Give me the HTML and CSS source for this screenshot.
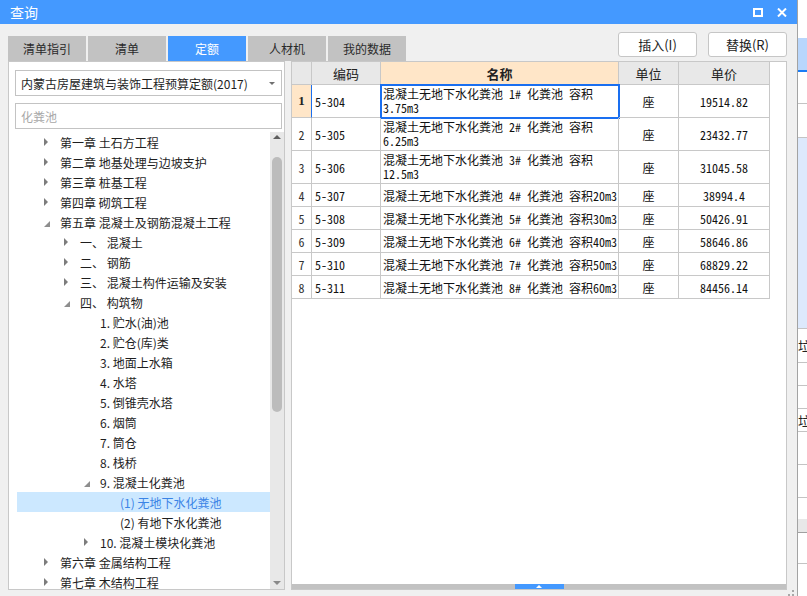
FILE: index.html
```html
<!DOCTYPE html>
<html lang="zh-CN">
<head>
<meta charset="utf-8">
<title>查询</title>
<link rel="stylesheet" href="styles.css">
</head>
<body>
<div class="app">
  <div class="dialog">
    <div class="titlebar">
      <span class="title">查询</span>
      <span class="tb-icons">
        <span class="ico-max"></span>
        <svg class="ico-close" width="10" height="9" viewBox="0 0 10 9"><path d="M1 0.5 L9 8.5 M9 0.5 L1 8.5" stroke="#fff" stroke-width="2" fill="none"/></svg>
      </span>
    </div>
    <div class="toolbar">
      <div class="tabs">
        <div class="tab">清单指引</div>
        <div class="tab">清单</div>
        <div class="tab active">定额</div>
        <div class="tab">人材机</div>
        <div class="tab">我的数据</div>
      </div>
      <div class="buttons">
        <button class="btn">插入(I)</button>
        <button class="btn">替换(R)</button>
      </div>
    </div>
    <div class="main">
      <div class="left">
        <div class="field combo"><span>内蒙古房屋建筑与装饰工程预算定额(2017)</span><span class="caret"></span></div>
        <div class="field search">化粪池</div>
        <div class="treewrap">
          <div class="tree">
            <div class="node l1"><span class="tw c"></span>第一章 土石方工程</div>
            <div class="node l1"><span class="tw c"></span>第二章 地基处理与边坡支护</div>
            <div class="node l1"><span class="tw c"></span>第三章 桩基工程</div>
            <div class="node l1"><span class="tw c"></span>第四章 砌筑工程</div>
            <div class="node l1"><span class="tw e"></span>第五章 混凝土及钢筋混凝土工程</div>
            <div class="node l2"><span class="tw c"></span>一、 混凝土</div>
            <div class="node l2"><span class="tw c"></span>二、 钢筋</div>
            <div class="node l2"><span class="tw c"></span>三、 混凝土构件运输及安装</div>
            <div class="node l2"><span class="tw e"></span>四、 构筑物</div>
            <div class="node l3"><span class="tw"></span>1. 贮水(油)池</div>
            <div class="node l3"><span class="tw"></span>2. 贮仓(库)类</div>
            <div class="node l3"><span class="tw"></span>3. 地面上水箱</div>
            <div class="node l3"><span class="tw"></span>4. 水塔</div>
            <div class="node l3"><span class="tw"></span>5. 倒锥壳水塔</div>
            <div class="node l3"><span class="tw"></span>6. 烟筒</div>
            <div class="node l3"><span class="tw"></span>7. 筒仓</div>
            <div class="node l3"><span class="tw"></span>8. 栈桥</div>
            <div class="node l3"><span class="tw e"></span>9. 混凝土化粪池</div>
            <div class="node l4 sel"><span class="tw"></span>(1) 无地下水化粪池</div>
            <div class="node l4"><span class="tw"></span>(2) 有地下水化粪池</div>
            <div class="node l3"><span class="tw c"></span>10. 混凝土模块化粪池</div>
            <div class="node l1"><span class="tw c"></span>第六章 金属结构工程</div>
            <div class="node l1"><span class="tw c"></span>第七章 木结构工程</div>
          </div>
          <div class="vscroll">
            <span class="vs-up"></span>
            <span class="vs-thumb"></span>
            <span class="vs-down"></span>
          </div>
        </div>
      </div>
      <div class="right">
        <div class="tablearea">
          <div class="grid">
            <div class="cell hd"></div>
            <div class="cell hd">编码</div>
            <div class="cell hd hname">名称</div>
            <div class="cell hd">单位</div>
            <div class="cell hd">单价</div>

            <div class="cell rn cur">1</div>
            <div class="cell data code curcode">5-304</div>
            <div class="cell data name two focus"><span class="ln1">混凝土无地下水化粪池 1# 化粪池 容积</span><span class="ln2">3.75m3</span></div>
            <div class="cell data ctr">座</div>
            <div class="cell data ctr">19514.82</div>

            <div class="cell rn">2</div>
            <div class="cell data code">5-305</div>
            <div class="cell data name two"><span class="ln1">混凝土无地下水化粪池 2# 化粪池 容积</span><span class="ln2">6.25m3</span></div>
            <div class="cell data ctr">座</div>
            <div class="cell data ctr">23432.77</div>

            <div class="cell rn">3</div>
            <div class="cell data code">5-306</div>
            <div class="cell data name two"><span class="ln1">混凝土无地下水化粪池 3# 化粪池 容积</span><span class="ln2">12.5m3</span></div>
            <div class="cell data ctr">座</div>
            <div class="cell data ctr">31045.58</div>

            <div class="cell rn">4</div>
            <div class="cell data code">5-307</div>
            <div class="cell data name">混凝土无地下水化粪池 4# 化粪池 容积20m3</div>
            <div class="cell data ctr">座</div>
            <div class="cell data ctr">38994.4</div>

            <div class="cell rn">5</div>
            <div class="cell data code">5-308</div>
            <div class="cell data name">混凝土无地下水化粪池 5# 化粪池 容积30m3</div>
            <div class="cell data ctr">座</div>
            <div class="cell data ctr">50426.91</div>

            <div class="cell rn">6</div>
            <div class="cell data code">5-309</div>
            <div class="cell data name">混凝土无地下水化粪池 6# 化粪池 容积40m3</div>
            <div class="cell data ctr">座</div>
            <div class="cell data ctr">58646.86</div>

            <div class="cell rn">7</div>
            <div class="cell data code">5-310</div>
            <div class="cell data name">混凝土无地下水化粪池 7# 化粪池 容积50m3</div>
            <div class="cell data ctr">座</div>
            <div class="cell data ctr">68829.22</div>

            <div class="cell rn">8</div>
            <div class="cell data code">5-311</div>
            <div class="cell data name">混凝土无地下水化粪池 8# 化粪池 容积60m3</div>
            <div class="cell data ctr">座</div>
            <div class="cell data ctr">84456.14</div>
          </div>
        </div>
        <div class="hscroll"><span class="hs-tab"><span class="hs-tri"></span></span></div>
      </div>
    </div>
    <svg class="grip" width="6" height="6" viewBox="0 0 6 6"><rect x="4" y="0" width="2" height="2" fill="#a8a8a8"/><rect x="0" y="4" width="2" height="2" fill="#a8a8a8"/><rect x="4" y="4" width="2" height="2" fill="#a8a8a8"/></svg>
  </div>
  <div class="strip">
    <div class="s s1"></div>
    <div class="s s2"></div>
    <div class="s s3"></div>
    <div class="s s4 ln"></div>
    <div class="s s5 ln"></div>
    <div class="s s6 ln"></div>
    <div class="s s7 ln txt">垃</div>
    <div class="s s8 ln"></div>
    <div class="s s8 ln"></div>
    <div class="s s8 ln txt">垃</div>
    <div class="s s9 ln"></div>
    <div class="s s9 ln"></div>
    <div class="s s10"></div>
    <div class="s s11"></div>
    <div class="s s12 ln"></div>
  </div>
</div>
</body>
</html>
```

FILE: styles.css
```css
* { box-sizing: border-box; }
html, body { margin: 0; padding: 0; }
body {
  width: 807px;
  height: 596px;
  overflow: hidden;
  background: #fff;
  font-family: "Noto Sans CJK SC", sans-serif;
  font-size: 12px;
  color: #1e1e1e;
}
.app { display: flex; width: 807px; height: 596px; }

.dialog {
  position: relative;
  width: 798px;
  height: 596px;
  flex: none;
  border-right: 1px solid #a3a3a3;
  background: #f0f0f0;
  display: flex;
  flex-direction: column;
}

/* title bar */
.titlebar {
  height: 24px;
  flex: none;
  background: #4499ff;
  display: flex;
  align-items: center;
  padding: 0 10px;
  color: #fff;
  font-size: 14px;
}
.title { line-height: 1; }
.tb-icons { margin-left: auto; display: flex; align-items: center; gap: 14px; }
.ico-max { width: 10px; height: 9px; border: 2px solid #fff; display: block; }
.ico-close { display: block; }

/* toolbar */
.toolbar {
  height: 37px;
  flex: none;
  display: flex;
  padding: 0 10px 0 8px;
}
.tabs { display: flex; gap: 2px; align-self: flex-end; }
.tab {
  width: 78px;
  height: 25px;
  background: #c2c2c2;
  color: #2a2a2a;
  font-size: 12px;
  display: flex;
  align-items: center;
  justify-content: center;
}
.tab.active { background: #4499ff; color: #fff; }
.buttons { margin-left: auto; margin-top: 8px; display: flex; gap: 11px; align-self: flex-start; }
.btn {
  width: 79px;
  height: 25px;
  padding: 0;
  background: #fff;
  border: 1px solid #c6c6c6;
  border-radius: 3px;
  font-family: "Noto Sans CJK SC", sans-serif;
  font-size: 13px;
  color: #222;
}

/* main */
.main {
  flex: 1;
  min-height: 0;
  display: flex;
  gap: 6px;
  padding: 0 10px 6px 8px;
}

.left {
  width: 277px;
  flex: none;
  border: 1px solid #c8c8c8;
  background: #fff;
  display: flex;
  flex-direction: column;
}
.field {
  margin-left: 6px;
  width: 267px;
  height: 26px;
  flex: none;
  border: 1px solid #c3c3c3;
  display: flex;
  align-items: center;
  padding: 0 4px 0 5px;
  font-size: 12px;
  white-space: nowrap;
}
.combo { margin-top: 8px; color: #1e1e1e; }
.search { margin-top: 7px; color: #a8a8a8; }
.caret {
  margin-left: auto;
  margin-right: 2px;
  border-left: 3px solid transparent;
  border-right: 3px solid transparent;
  border-top: 3px solid #707070;
}

.treewrap { flex: 1; min-height: 0; display: flex; margin-top: 3px; }
.tree { flex: 1; margin-left: 8px; overflow: hidden; }
.node {
  height: 20px;
  display: flex;
  align-items: center;
  white-space: nowrap;
  font-size: 12px;
  color: #1e1e1e;
}
.l1 { padding-left: 23px; }
.l2 { padding-left: 43px; }
.l3 { padding-left: 63px; }
.l4 { padding-left: 83px; }
.tw { width: 20px; height: 20px; flex: none; display: flex; align-items: center; }
.tw.c::before {
  content: "";
  margin-left: 4px;
  border-left: 4px solid #7c7c7c;
  border-top: 4px solid transparent;
  border-bottom: 4px solid transparent;
}
.tw.e::before {
  content: "";
  margin-left: 4px;
  margin-top: 3px;
  border-bottom: 6px solid #8e8e8e;
  border-left: 6px solid transparent;
}
.node.sel { background: #cce8ff; color: #3b84e6; }

.vscroll {
  width: 14px;
  flex: none;
  background: #e8e8e8;
  display: flex;
  flex-direction: column;
  align-items: center;
}
.vs-up {
  margin-top: 3px;
  border-left: 4px solid transparent;
  border-right: 4px solid transparent;
  border-bottom: 4px solid #5f5f5f;
}
.vs-thumb {
  margin-top: 18px;
  width: 10px;
  height: 255px;
  border-radius: 5px;
  background: #bcbcbc;
}
.vs-down {
  margin-top: auto;
  margin-bottom: 4px;
  border-left: 4px solid transparent;
  border-right: 4px solid transparent;
  border-top: 4px solid #8a8a8a;
}

/* right panel */
.right {
  flex: 1;
  min-width: 0;
  border: 1px solid #c8c8c8;
  background: #fff;
  display: flex;
  flex-direction: column;
}
.tablearea { flex: 1; min-height: 0; overflow: hidden; }
.grid {
  display: grid;
  grid-template-columns: 20px 69px 238px 60px 91px;
  grid-template-rows: 23px 33px 33px 33px repeat(5, 23px);
  width: 478px;
}
.cell {
  border-right: 1px solid #c8c8c8;
  border-bottom: 1px solid #c8c8c8;
  display: flex;
  align-items: center;
  white-space: nowrap;
  overflow: hidden;
}
.hd {
  background: #e8e8e8;
  justify-content: center;
  font-size: 13px;
  color: #222;
}
.hd.hname { background: #ffe6c8; font-weight: bold; }
.data {
  font-family: "Noto Sans Mono CJK SC", "Noto Sans CJK SC", monospace;
  font-size: 12px;
  color: #111;
}
.rn {
  justify-content: center;
  font-family: "Noto Sans Mono CJK SC", "Noto Sans CJK SC", monospace;
  font-size: 12px;
  color: #333;
}
.rn.cur {
  background: #ffe6c8;
  font-family: "Liberation Serif", serif;
  font-weight: bold;
  font-size: 13px;
  color: #222;
  border-right-color: #1a6ff0;
}
.code { padding-left: 3px; }
.name { padding-left: 2px; }
.name.two {
  flex-direction: column;
  align-items: flex-start;
  justify-content: flex-start;
  padding-top: 2px;
}
.ln1, .ln2 { display: block; height: 14px; line-height: 14px; }
.name.focus { outline: 2px solid #1a6ff0; outline-offset: -1px; }
.ctr { justify-content: center; }

.hscroll {
  height: 5px;
  flex: none;
  background: #c2c2c2;
  display: flex;
  justify-content: center;
}
.hs-tab {
  width: 49px;
  height: 5px;
  background: #4499ff;
  display: flex;
  align-items: center;
  justify-content: center;
}
.hs-tri {
  border-left: 3px solid transparent;
  border-right: 3px solid transparent;
  border-bottom: 3px solid #fff;
}

.grip { position: absolute; right: 3px; bottom: 0; display: block; }

/* background window strip */
.strip {
  width: 9px;
  flex: none;
  display: flex;
  flex-direction: column;
  overflow: hidden;
  background: #fff;
}
.s { flex: none; width: 9px; overflow: hidden; }
.ln { border-bottom: 1px solid #c4c4c4; }
.txt { font-size: 13px; color: #222; display: flex; align-items: center; white-space: nowrap; line-height: 1; }
.s1 { height: 38px; }
.s2 { height: 32px; background: #b8d6fc; }
.s3 { height: 2px; background: #1a7cf5; }
.s4 { height: 32px; }
.s5 { height: 34px; }
.s6 { height: 191px; background: #dde9fc; }
.s7 { height: 34px; }
.s8 { height: 23px; }
.s9 { height: 33px; }
.s10 { height: 21px; }
.s11 { height: 14px; background: #e8e8e8; border-bottom: 1px solid #a0a0a0; }
.s12 { height: 31px; }
```
